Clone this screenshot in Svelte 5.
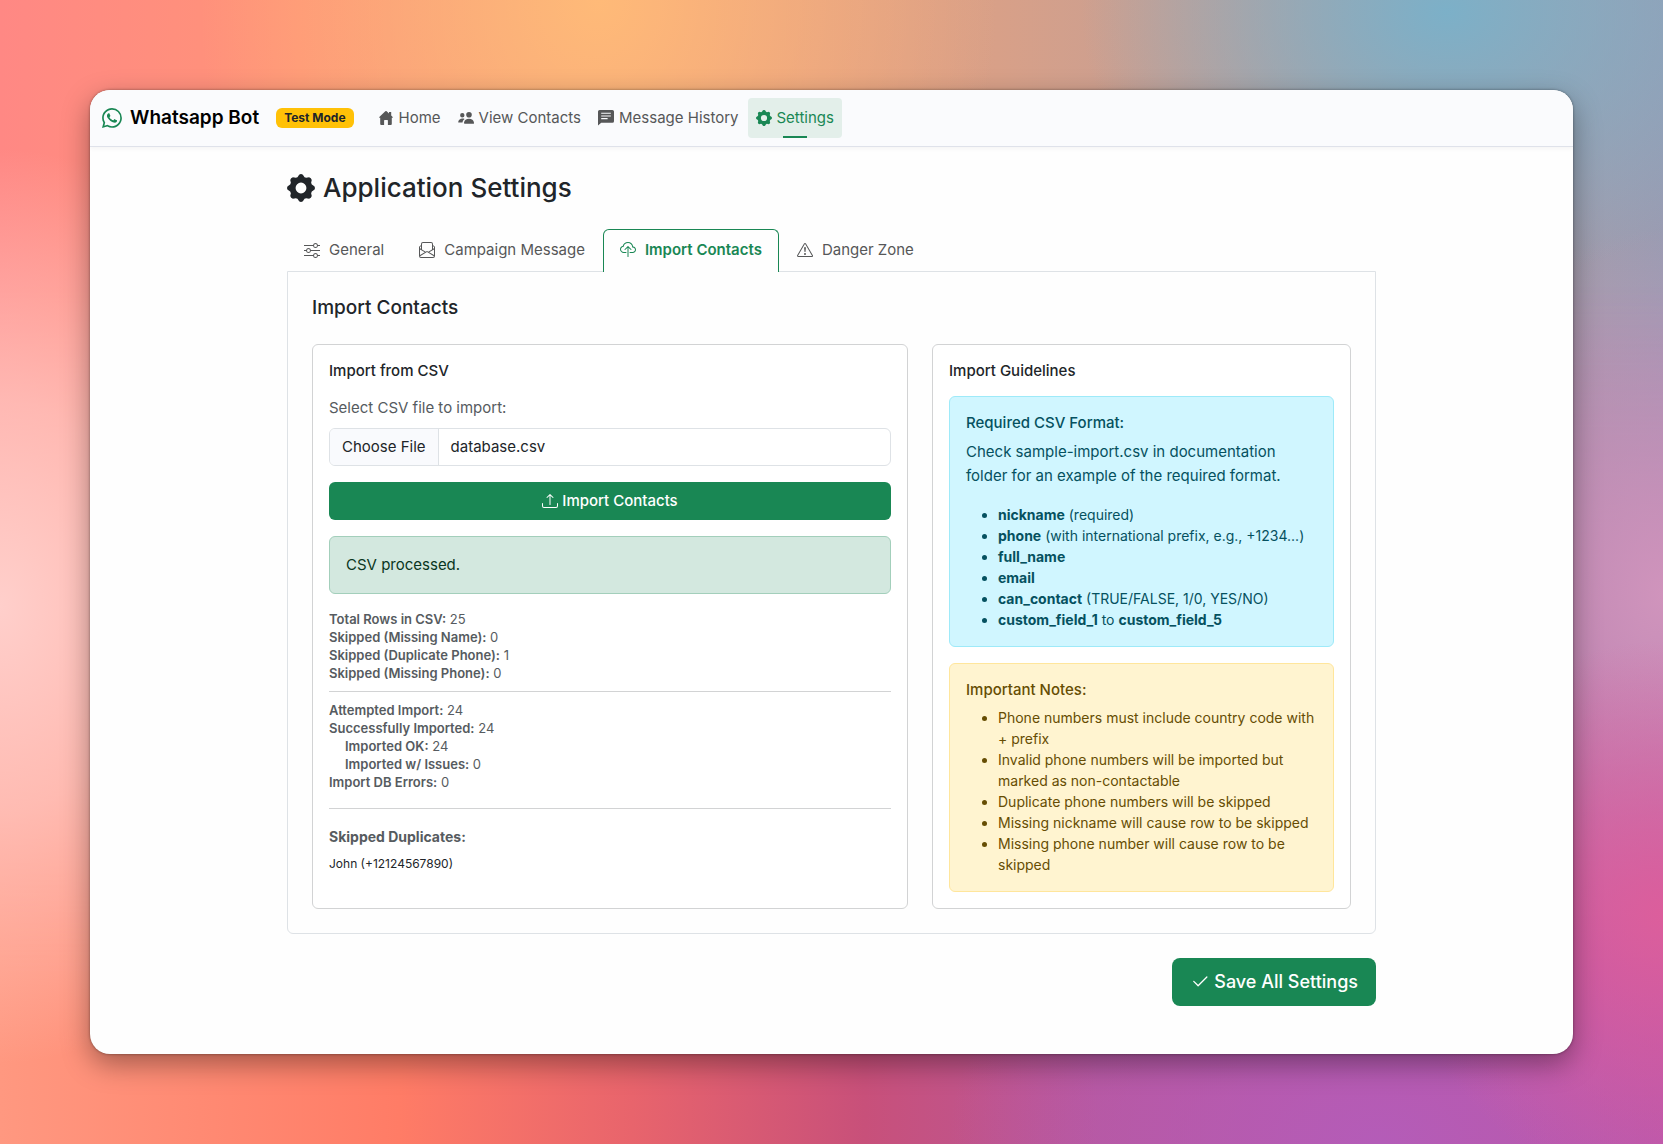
<script>
  import { onMount } from 'svelte';

  let fileInput;

  // Cog outline: eight blunt teeth on a 16-unit grid, with a round hub.
  const polar = (radius, degrees) => {
    const a = (degrees * Math.PI) / 180;
    return `${(8 + radius * Math.sin(a)).toFixed(2)} ${(8 - radius * Math.cos(a)).toFixed(2)}`;
  };
  const teeth = Array.from({ length: 8 }, (_, i) => i * 45).map(
    (t) => `${polar(6.5, t - 18)}L${polar(7.7, t - 8)}Q${polar(8.3, t)} ${polar(7.7, t + 8)}L${polar(6.5, t + 18)}`
  );
  const gear = [`M${teeth.join('L')}zM8 4.9a3.1 3.1 0 1 0 0 6.2 3.1 3.1 0 0 0 0-6.2z`];

  const icons = {
    whatsapp: [
      'M13.601 2.326A7.85 7.85 0 0 0 7.994 0C3.627 0 .068 3.558.064 7.926c0 1.399.366 2.76 1.057 3.965L0 16l4.204-1.102a7.9 7.9 0 0 0 3.79.965h.004c4.368 0 7.926-3.558 7.93-7.93A7.9 7.9 0 0 0 13.6 2.326zM7.994 14.521a6.6 6.6 0 0 1-3.356-.92l-.24-.144-2.494.654.666-2.433-.156-.251a6.56 6.56 0 0 1-1.007-3.505c0-3.626 2.957-6.584 6.591-6.584a6.56 6.56 0 0 1 4.66 1.931 6.56 6.56 0 0 1 1.928 4.66c-.004 3.639-2.961 6.592-6.592 6.592m3.615-4.934c-.197-.099-1.17-.578-1.353-.646-.182-.065-.315-.099-.445.099-.133.197-.513.646-.627.775-.114.133-.232.148-.43.05-.197-.1-.836-.308-1.592-.985-.59-.525-.985-1.175-1.103-1.372-.114-.198-.011-.304.088-.403.087-.088.197-.232.296-.346.1-.114.133-.198.198-.33.065-.134.034-.248-.015-.347-.05-.099-.445-1.076-.612-1.47-.16-.389-.323-.335-.445-.34-.114-.007-.247-.007-.38-.007a.73.73 0 0 0-.529.247c-.182.198-.691.677-.691 1.654s.71 1.916.81 2.049c.098.133 1.394 2.132 3.383 2.992.47.205.84.326 1.129.418.475.152.904.129 1.246.08.38-.058 1.171-.48 1.338-.943.164-.464.164-.86.114-.943-.049-.084-.182-.133-.38-.232'
    ],
    home: [
      'M7.3 1.3a1 1 0 0 1 1.4 0L11 3.4V2h2.2v3.5l1.5 1.4c.3.3.1.8-.3.8h-.6V14a1 1 0 0 1-1 1H9.9v-4.4a.6.6 0 0 0-.6-.6H6.7a.6.6 0 0 0-.6.6V15H3.2a1 1 0 0 1-1-1V7.7h-.6c-.4 0-.6-.5-.3-.8z'
    ],
    people: [
      'M4.3 3a2.200 2.200 0 1 1 0 4.400 2.200 2.200 0 0 1 0-4.400M11 2a2.8 2.8 0 1 1 0 5.6A2.8 2.8 0 0 1 11 2M4.5 8.5c.8 0 1.5.1 2.100.4C5.4 9.7 4.7 11 4.5 12.6H.8a.6.6 0 0 1-.6-.7C.5 9.8 2.3 8.5 4.5 8.5M11 8.7c2.7 0 4.700 1.5 5 4.100a.8.8 0 0 1-.8.9H6.8a.8.8 0 0 1-.8-.9c.3-2.600 2.300-4.100 5-4.100'
    ],
    message: [
      'M1.6 0h12.8A1.6 1.6 0 0 1 16 1.6v9.6a1.6 1.6 0 0 1-1.6 1.6H3.200L0 15.5V1.6A1.6 1.6 0 0 1 1.6 0M3.200 2.700v1.100h9.600V2.700zm0 2.700v1.100h9.600V5.400zm0 2.700v1.100h6.400V8.100z'
    ],
    gear,
    sliders: [
      'M11.5 2a1.5 1.5 0 1 0 0 3 1.5 1.5 0 0 0 0-3M9.05 3a2.5 2.5 0 0 1 4.9 0H16v1h-2.05a2.5 2.5 0 0 1-4.9 0H0V3zM4.5 7a1.5 1.5 0 1 0 0 3 1.5 1.5 0 0 0 0-3M2.05 8a2.5 2.5 0 0 1 4.9 0H16v1H6.95a2.5 2.5 0 0 1-4.9 0H0V8zm9.45 4a1.5 1.5 0 1 0 0 3 1.5 1.5 0 0 0 0-3m-2.45 1a2.5 2.5 0 0 1 4.9 0H16v1h-2.05a2.5 2.5 0 0 1-4.9 0H0v-1z'
    ],
    envelope: [
      'M4 0a2 2 0 0 0-2 2v1.133l-.941.502A2 2 0 0 0 0 5.4V14a2 2 0 0 0 2 2h12a2 2 0 0 0 2-2V5.4a2 2 0 0 0-1.059-1.765L14 3.133V2a2 2 0 0 0-2-2zm10 4.267.47.25A1 1 0 0 1 15 5.4v.817l-1 .6zm-1 3.15-3.75 2.25L8 8.917l-1.25.75L3 7.417V2a1 1 0 0 1 1-1h8a1 1 0 0 1 1 1zm-11-.6-1-.6V5.4a1 1 0 0 1 .53-.883L2 4.267zm13 .566v5.734l-4.778-2.867zm-.035 6.88A1 1 0 0 1 14 15H2a1 1 0 0 1-.965-.738L8 10.083zM1 13.116V7.383l4.778 2.867z'
    ],
    cloud: [
      'M4.406 1.342A5.53 5.53 0 0 1 8 0c2.69 0 4.923 2 5.166 4.579C14.758 4.804 16 6.137 16 7.773 16 9.569 14.502 11 12.687 11H10a.5.5 0 0 1 0-1h2.688C13.979 10 15 8.988 15 7.773c0-1.216-1.02-2.228-2.313-2.228h-.5v-.5C12.188 2.825 10.328 1 8 1a4.53 4.53 0 0 0-2.941 1.1c-.757.652-1.153 1.438-1.153 2.055v.448l-.445.049C2.064 4.805 1 5.952 1 7.318 1 8.785 2.23 10 3.781 10H6a.5.5 0 0 1 0 1H3.781C1.708 11 0 9.366 0 7.318c0-1.763 1.266-3.223 2.942-3.593.143-.863.698-1.723 1.464-2.383',
      'M7.646 4.146a.5.5 0 0 1 .708 0l3 3a.5.5 0 0 1-.708.708L8.5 5.707V14.5a.5.5 0 0 1-1 0V5.707L5.354 7.854a.5.5 0 1 1-.708-.708z'
    ],
    warning: [
      'M7.938 2.016A.13.13 0 0 1 8.002 2a.13.13 0 0 1 .063.016.15.15 0 0 1 .054.057l6.857 11.667c.036.06.035.124.002.183a.2.2 0 0 1-.054.06.1.1 0 0 1-.066.017H1.146a.1.1 0 0 1-.066-.017.2.2 0 0 1-.054-.06.18.18 0 0 1 .002-.183L7.884 2.073a.15.15 0 0 1 .054-.057m1.044-.45a1.13 1.13 0 0 0-1.96 0L.165 13.233c-.457.778.091 1.767.98 1.767h13.713c.889 0 1.438-.99.98-1.767z',
      'M7.002 12a1 1 0 1 1 2 0 1 1 0 0 1-2 0M7.1 5.995a.905.905 0 1 1 1.8 0l-.35 3.507a.552.552 0 0 1-1.1 0z'
    ],
    upload: [
      'M.5 9.9a.5.5 0 0 1 .5.5v2.5a1 1 0 0 0 1 1h12a1 1 0 0 0 1-1v-2.5a.5.5 0 0 1 1 0v2.5a2 2 0 0 1-2 2H2a2 2 0 0 1-2-2v-2.5a.5.5 0 0 1 .5-.5',
      'M7.646 1.146a.5.5 0 0 1 .708 0l3 3a.5.5 0 0 1-.708.708L8.5 2.707V11.5a.5.5 0 0 1-1 0V2.707L5.354 4.854a.5.5 0 1 1-.708-.708z'
    ],
    check: [
      'M13.854 3.646a.5.5 0 0 1 0 .708l-7 7a.5.5 0 0 1-.708 0l-3.5-3.5a.5.5 0 1 1 .708-.708L6.5 10.293l6.646-6.647a.5.5 0 0 1 .708 0'
    ]
  };

  const links = [
    { label: 'Home', icon: 'home' },
    { label: 'View Contacts', icon: 'people' },
    { label: 'Message History', icon: 'message' },
    { label: 'Settings', icon: 'gear', active: true }
  ];

  const tabs = [
    { label: 'General', icon: 'sliders' },
    { label: 'Campaign Message', icon: 'envelope' },
    { label: 'Import Contacts', icon: 'cloud' },
    { label: 'Danger Zone', icon: 'warning' }
  ];
  let activeTab = 'Import Contacts';

  const skipped = [
    { label: 'Total Rows in CSV:', value: 25 },
    { label: 'Skipped (Missing Name):', value: 0 },
    { label: 'Skipped (Duplicate Phone):', value: 1 },
    { label: 'Skipped (Missing Phone):', value: 0 }
  ];
  const imported = [
    { label: 'Attempted Import:', value: 24 },
    { label: 'Successfully Imported:', value: 24 },
    { label: 'Imported OK:', value: 24, nested: true },
    { label: 'Imported w/ Issues:', value: 0, nested: true },
    { label: 'Import DB Errors:', value: 0 }
  ];
  const notes = [
    'Phone numbers must include country code with + prefix',
    'Invalid phone numbers will be imported but marked as non-contactable',
    'Duplicate phone numbers will be skipped',
    'Missing nickname will cause row to be skipped',
    'Missing phone number will cause row to be skipped'
  ];

  onMount(() => {
    const transfer = new DataTransfer();
    transfer.items.add(new File([''], 'database.csv', { type: 'text/csv' }));
    fileInput.files = transfer.files;
  });
</script>

{#snippet icon(name)}
  <svg class="icon" viewBox="0 0 16 16" fill="currentColor" fill-rule={name === 'gear' || name === 'message' ? 'evenodd' : 'nonzero'} aria-hidden="true">
    {#each icons[name] as d}<path {d} />{/each}
  </svg>
{/snippet}

<div class="backdrop">
  <div class="window">
    <header class="navbar">
      <a class="brand" href="#home">{@render icon('whatsapp')}<span>Whatsapp Bot</span></a>
      <span class="badge">Test Mode</span>
      <nav>
        {#each links as link}
          <a class="nav-link" class:active={link.active} href="#{link.icon}">{@render icon(link.icon)}{link.label}</a>
        {/each}
      </nav>
    </header>

    <main>
      <h1>{@render icon('gear')}Application Settings</h1>

      <div class="tabs" role="tablist">
        {#each tabs as tab}
          <button
            type="button"
            role="tab"
            class="tab"
            class:active={activeTab === tab.label}
            aria-selected={activeTab === tab.label}
            on:click={() => (activeTab = tab.label)}
          >{@render icon(tab.icon)}{tab.label}</button>
        {/each}
      </div>

      <section class="panel">
        <h2>Import Contacts</h2>
        <div class="columns">
          <div class="card">
            <h3>Import from CSV</h3>
            <label for="csv">Select CSV file to import:</label>
            <input id="csv" type="file" accept=".csv" bind:this={fileInput} />
            <button type="button" class="btn">{@render icon('upload')}Import Contacts</button>
            <div class="alert success" role="status">CSV processed.</div>
            <div class="stats">
              {#each skipped as row}
                <div><b>{row.label}</b> {row.value}</div>
              {/each}
              <hr />
              {#each imported as row}
                <div class:nested={row.nested}><b>{row.label}</b> {row.value}</div>
              {/each}
            </div>
            <hr class="wide" />
            <h4>Skipped Duplicates:</h4>
            <div class="duplicate">John (+12124567890)</div>
          </div>

          <div class="card">
            <h3>Import Guidelines</h3>
            <div class="alert info">
              <h4>Required CSV Format:</h4>
              <p>Check sample-import.csv in documentation folder for an example of the required format.</p>
              <ul>
                <li><b>nickname</b> (required)</li>
                <li><b>phone</b> (with international prefix, e.g., +1234...)</li>
                <li><b>full_name</b></li>
                <li><b>email</b></li>
                <li><b>can_contact</b> (TRUE/FALSE, 1/0, YES/NO)</li>
                <li><b>custom_field_1</b> to <b>custom_field_5</b></li>
              </ul>
            </div>
            <div class="alert warn">
              <h4>Important Notes:</h4>
              <ul>
                {#each notes as note}<li>{note}</li>{/each}
              </ul>
            </div>
          </div>
        </div>
      </section>

      <div class="actions">
        <button type="button" class="btn large">{@render icon('check')}Save All Settings</button>
      </div>
    </main>
  </div>
</div>

<style>
  :global(body) { margin: 0; }
  .backdrop, .backdrop * { box-sizing: border-box; }
  .backdrop {
    position: relative;
    isolation: isolate;
    min-height: 100vh;
    padding: 90px;
    display: flex;
    font-family: Inter, "Liberation Sans", sans-serif;
    font-size: 15px;
    line-height: 24px;
    color: #212529;
    background: linear-gradient(90deg, #ff8884 0%, #ff9478 18%, #d8a088 60%, #9a9cb2 100%);
  }
  /* The lower colours fade in over the upper ones, then the glows lie on both. */
  .backdrop::before, .backdrop::after {
    content: "";
    position: absolute;
    inset: 0;
    z-index: -1;
  }
  .backdrop::before {
    background: linear-gradient(90deg, #ff9880 0%, #ff7c66 24%, #e8646c 38%, #c8507a 52%, #b8589c 66%, #be56a6 100%);
    mask-image: linear-gradient(transparent 25%, #000 85%);
  }
  .backdrop::after {
    background:
      radial-gradient(ellipse 20% 40% at 0% 53%, #ffcfcb 0%, #ffcfcbaa 45%, #ffcfcb00 100%),
      radial-gradient(ellipse 24% 40% at 36% 0%, #ffba78 0%, #ffba7800 100%),
      radial-gradient(ellipse 22% 24% at 87% 1%, #7cb0c8 0%, #7cb0c800 100%),
      radial-gradient(ellipse 16% 24% at 100% 80%, #dc5e9c 0%, #dc5e9c00 100%),
      radial-gradient(ellipse 16% 32% at 100% 52%, #d094bc 0%, #d094bc00 100%),
      radial-gradient(ellipse 26% 26% at 83% 100%, #b45cb8 0%, #b45cb800 100%);
  }
  .icon { width: 16px; height: 16px; flex: none; }
  .window {
    flex: 1;
    min-width: 0;
    background: #fefefe;
    border-radius: 20px;
    overflow: hidden;
    box-shadow: 0 10px 28px rgba(0, 0, 0, 0.36), 0 0 3px rgba(0, 0, 0, 0.4);
  }

  .navbar {
    display: flex;
    align-items: center;
    padding: 8px 12px;
    background: #fafbfd;
    border-bottom: 1px solid #dfe2ea;
    box-shadow: 0 2px 4px rgba(0, 0, 0, 0.04);
  }
  .brand {
    display: flex;
    align-items: center;
    gap: 8px;
    margin-right: 17px;
    color: #000;
    font-size: 19px;
    font-weight: 600;
    text-decoration: none;
  }
  .brand :global(.icon) { width: 20px; height: 20px; color: #198754; }
  .badge {
    padding: 4px 8px;
    margin-right: 16px;
    border-radius: 6px;
    background: #ffc107;
    font-size: 12px;
    line-height: 12px;
    font-weight: 700;
  }
  nav { display: flex; gap: 1px; }
  .nav-link {
    position: relative;
    display: flex;
    align-items: center;
    gap: 5px;
    padding: 8px;
    border-radius: 4px;
    color: #565758;
    text-decoration: none;
  }
  .nav-link.active { color: #198754; background: #e3efea; }
  .nav-link.active::after {
    content: "";
    position: absolute;
    left: 50%;
    bottom: 0;
    width: 24px;
    height: 2px;
    margin-left: -12px;
    background: #198754;
  }

  main { max-width: 1089px; margin: 0 auto; padding: 24px 0 48px; }
  h1, h2, h3, h4, p { margin: 0; font-weight: 500; }
  h1 {
    display: flex;
    align-items: center;
    gap: 8px;
    margin-bottom: 24px;
    font-size: 26px;
    line-height: 34px;
  }
  h1 .icon { width: 28px; height: 28px; }

  .tabs { display: flex; gap: 1px; }
  .tab {
    display: flex;
    align-items: center;
    gap: 9px;
    padding: 8px 16px 9px;
    border: 1px solid transparent;
    border-bottom: 0;
    border-radius: 6px 6px 0 0;
    background: none;
    color: #565758;
    font: inherit;
  }
  .tab.active {
    margin-bottom: -1px;
    padding-bottom: 10px;
    position: relative;
    border-color: #198754;
    background: #fefefe;
    color: #198754;
    font-weight: 600;
  }

  .panel { padding: 24px; border: 1px solid #dee2e6; border-radius: 0 0 6px 6px; }
  h2 { margin-bottom: 24px; font-size: 19px; }
  .columns { display: grid; grid-template-columns: minmax(0, 596fr) minmax(0, 419fr); gap: 24px; }
  .card { padding: 16px; border: 1px solid #d2d3d4; border-radius: 6px; background: #fff; }
  h3 { margin-bottom: 15px; font-size: 15px; line-height: 20px; }
  label { display: block; margin-bottom: 8px; color: #565b60; }

  input[type="file"] {
    display: block;
    width: 100%;
    margin-bottom: 16px;
    padding: 6px 12px;
    border: 1px solid #dee2e6;
    border-radius: 6px;
    background: #fff;
    color: #212529;
    font: inherit;
    overflow: hidden;
  }
  input[type="file"]::file-selector-button {
    margin: -6px 12px -6px -12px;
    padding: 6px 12px;
    border: 0 solid #dee2e6;
    border-right-width: 1px;
    background: #f9fafd;
    color: #212529;
    font: inherit;
  }

  .btn {
    display: flex;
    align-items: center;
    justify-content: center;
    gap: 4px;
    width: 100%;
    padding: 7px 12px;
    margin-bottom: 16px;
    border: 0;
    border-radius: 6px;
    background: #198754;
    color: #fff;
    font: inherit;
    font-weight: 500;
  }
  .btn.large { width: auto; margin: 0; padding: 12px 18px; border-radius: 8px; font-size: 18px; }
  .btn.large .icon { width: 20px; height: 20px; }

  .alert { padding: 16px; border: 1px solid; border-radius: 6px; }
  .success { margin-bottom: 16px; background: #d3e8df; border-color: #a3cfbb; color: #0a3622; }
  .info { margin-bottom: 16px; background: #d0f6ff; border-color: #9eeaf9; color: #055160; }
  .warn { background: #fff4d0; border-color: #ffe69c; color: #664d03; }
  .alert h4 { margin-bottom: 8px; font-size: 15px; line-height: 19px; }
  .alert p { margin-bottom: 16px; font-weight: 400; }
  ul { margin: 0; padding-left: 32px; font-size: 14px; line-height: 21px; }
  b { font-weight: 700; }

  .stats { color: #565b60; font-size: 13px; line-height: 18px; }
  .stats b { font-weight: 600; }
  .nested { padding-left: 16px; }
  hr { margin: 9px 0; border: 0; border-top: 1px solid #d2d3d4; }
  hr.wide { margin: 17px 0; }
  .card > h4 { margin-bottom: 8px; color: #565b60; font-size: 14px; line-height: 21px; font-weight: 700; }
  .duplicate { font-size: 12px; line-height: 18px; }

  .actions { display: flex; justify-content: flex-end; margin-top: 24px; }
</style>
